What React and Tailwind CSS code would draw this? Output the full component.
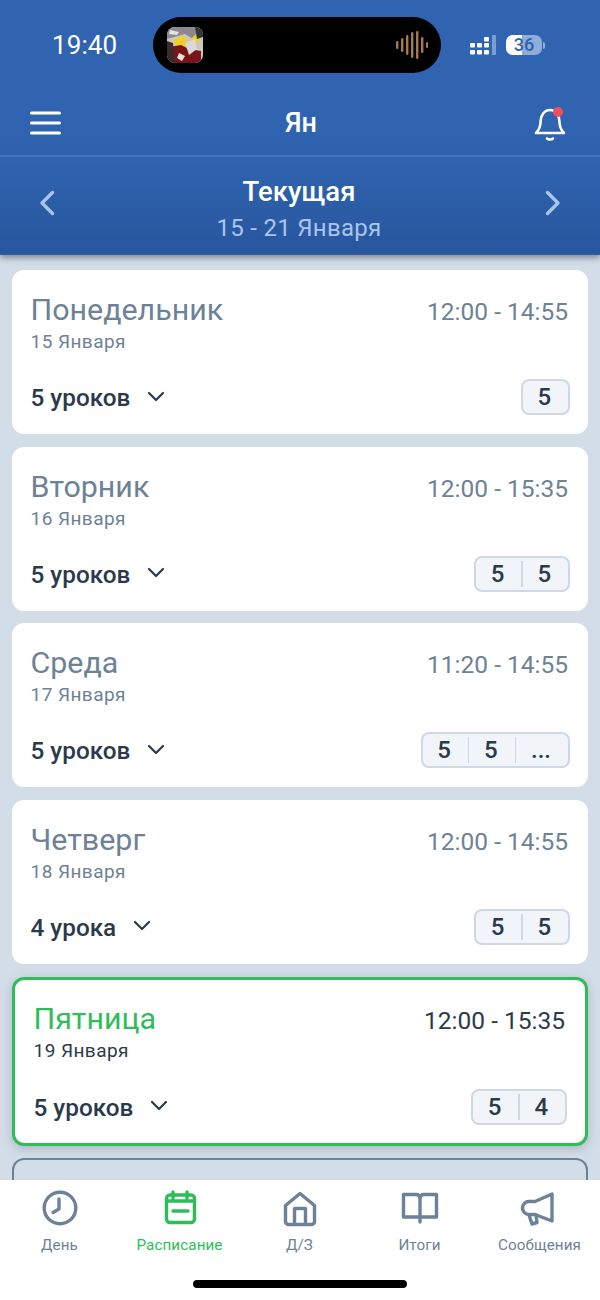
import React from 'react';

const DAYS = [
  { name: 'Понедельник', date: '15 Января', time: '12:00 - 14:55', lessons: '5 уроков', marks: ['5'] },
  { name: 'Вторник', date: '16 Января', time: '12:00 - 15:35', lessons: '5 уроков', marks: ['5', '5'] },
  { name: 'Среда', date: '17 Января', time: '11:20 - 14:55', lessons: '5 уроков', marks: ['5', '5', '...'] },
  { name: 'Четверг', date: '18 Января', time: '12:00 - 14:55', lessons: '4 урока', marks: ['5', '5'] },
  { name: 'Пятница', date: '19 Января', time: '12:00 - 15:35', lessons: '5 уроков', marks: ['5', '4'], active: true },
];

const Chevron = () => (
  <svg width="18" height="12" viewBox="0 0 18 12" fill="none" stroke="#2b3a4b" strokeWidth="2.2" strokeLinecap="round" strokeLinejoin="round">
    <path d="M2 2l7 7 7-7" />
  </svg>
);

const Marks = ({ marks }) => (
  <div className="-mr-[2px] flex h-[36px] -translate-y-[1px] items-center rounded-lg border-2 border-[#cfd8e3] bg-[#f1f4f8]">
    {marks.map((m, i) => (
      <React.Fragment key={i}>
        {i > 0 && <div className="h-[26px] w-[1.5px] bg-[#cfd8e3]" />}
        <div className={`pr-[2px] text-center text-[24px] leading-none font-medium text-[#2b3a4b] ${m === '...' ? 'w-[52px]' : 'w-[45.250px]'}`}>{m}</div>
      </React.Fragment>
    ))}
  </div>
);

const DayCard = ({ day }) => (
  <div className={`shrink-0 rounded-xl bg-white pr-[20px] pl-[18.500px] ${day.active ? 'h-[169px] border-[3px] border-[#2fbd59] pt-[20px] shadow-[0_3px_10px_rgba(100,116,139,0.35)]' : 'h-[164px] pt-[21px]'}`}>
    <div className="flex items-start justify-between">
      <div className={`text-[30.400px] leading-[38px] ${day.active ? 'text-[#2fbd59]' : 'text-[#6d8296]'}`}>{day.name}</div>
      <div className={`pt-[6px] text-[24.500px] leading-[30px] ${day.active ? 'text-[#2b3a4b]' : 'text-[#6d8296]'}`}>{day.time}</div>
    </div>
    <div className={`mt-[1px] text-[19px] leading-[24px] tracking-[0.45px] ${day.active ? 'text-[#2b3a4b]' : 'text-[#6d8296]'}`}>{day.date}</div>
    <div className={`flex items-center justify-between ${day.active ? 'mt-[27px]' : 'mt-[26px]'}`}>
      <div className="flex items-center gap-[17px]">
        <span className="text-[24.300px] leading-[36px] font-medium text-[#2b3a4b]">{day.lessons}</span>
        <span className="-mt-[3px]"><Chevron /></span>
      </div>
      <Marks marks={day.marks} />
    </div>
  </div>
);

const AlbumArt = () => (
  <svg width="36" height="36" viewBox="0 0 36 36" className="rounded-[8px]">
    <rect width="36" height="36" fill="#cfc7b8" />
    <path d="M0 0h36v8l-10 4-8-5L0 12z" fill="#8d8794" />
    <path d="M6 14l10-6 4 8 10-10 2 8-12 10-8-2z" fill="#ecd21f" />
    <path d="M2 20l12-2 8 4 12 2v12H6z" fill="#7a1418" />
    <path d="M18 16l10-4 2 10-8 6z" fill="#d9d9dc" />
    <path d="M0 14l6 2 2 20H0z" fill="#3a2a2c" />
    <path d="M28 0h8v10l-6 2z" fill="#2c3a2f" />
    <path d="M3 3l9 2-2 3-8-1zM12 26l6 3-3 5-5-3z" fill="#e8e4da" />
  </svg>
);

const Wave = () => (
  <svg width="32" height="28" viewBox="0 0 32 28" fill="#a57a4e">
    {[[0, 8], [5, 14], [10, 20], [15, 26], [20, 28], [25, 16], [30, 6]].map(([x, h]) => (
      <rect key={x} x={x} y={14 - h / 2} width="2.4" height={h} rx="1.2" />
    ))}
  </svg>
);

const Signal = () => (
  <svg width="27" height="20" viewBox="0 0 27 20" fill="#fff">
    {[[0, 8], [0, 15], [7, 8], [7, 15], [14, 2], [14, 8], [14, 15]].map(([x, y]) => (
      <rect key={`${x}-${y}`} x={x} y={y} width="5" height="4.6" rx="1" />
    ))}
    <rect x="22" y="0" width="4" height="20" rx="1" fill="#7d9fd0" />
  </svg>
);

const StatusBar = () => (
  <div className="relative flex h-[100px] shrink-0 items-start">
    <div className="mt-[27px] ml-[52px] w-[66px] text-[26px] leading-[36px] tracking-[0.1px] text-white">19:40</div>
    <div className="mt-[17px] ml-[35px] flex h-[56px] w-[288px] items-center justify-between rounded-full bg-black pr-[13px] pl-[14px]">
      <AlbumArt />
      <Wave />
    </div>
    <div className="mt-[35px] ml-[29px] flex items-center gap-[9px]">
      <Signal />
      <div className="flex items-center gap-[1px]">
        <div className="relative flex h-[20px] w-[36px] items-center justify-center overflow-hidden rounded-[7px] bg-[#8fadd8] text-[18px] leading-none font-medium text-[#2f62ad]">
          <div className="absolute inset-y-0 left-0 w-[16px] bg-white" />
          <span className="relative">36</span>
        </div>
        <div className="h-[7px] w-[2px] rounded-r bg-[#8fadd8]" />
      </div>
    </div>
  </div>
);

const Header = () => (
  <div className="relative z-10 h-[255px] shrink-0 bg-gradient-to-b from-[#3064b0] via-[#3064b0] to-[#2a5ba4] shadow-[0_3px_6px_rgba(30,41,59,0.45)]">
    <StatusBar />
    <div className="flex h-[57px] items-center justify-between border-b-2 border-[#4474bb] pr-[34px] pb-[9px] pl-[30px]">
      <svg width="31" height="24" viewBox="0 0 31 24" stroke="#fff" strokeWidth="3" strokeLinecap="round">
        <path d="M1.5 2h28M1.5 12h28M1.5 22h28" />
      </svg>
      <div className="pl-[7px] text-[27px] font-medium text-white">Ян</div>
      <div className="relative">
        <svg width="32" height="36" viewBox="0 0 32 36" fill="none" stroke="#fff" strokeWidth="2.6" strokeLinecap="round" strokeLinejoin="round">
          <path d="M2 28h28c-3-3-4.5-6-4.5-11 0-6-3.5-12-9.5-12S6.500 11 6.500 17c0 5-1.500 8-4.500 11z" />
          <path d="M13 33.500c1.500 1.300 4.500 1.300 6 0" />
        </svg>
        <div className="absolute top-[2px] right-[3px] size-[10px] rounded-full bg-[#f0505a]" />
      </div>
    </div>
    <div className="flex h-[96px] items-center justify-between bg-gradient-to-b from-[#3064b0] to-[#27569d] px-[39px]">
      <svg width="16" height="26" viewBox="0 0 16 26" fill="none" stroke="#a9c5ee" strokeWidth="3.4" strokeLinecap="round" strokeLinejoin="round" className="-mt-[4px]">
        <path d="M13.500 2.500L3 13l10.500 10.500" />
      </svg>
      <div className="pt-[8px] pr-[2px] text-center">
        <div className="text-[27.500px] leading-[37px] font-medium text-white">Текущая</div>
        <div className="text-[24px] leading-[36px] tracking-[0.3px] text-[#a9c5ee]">15 - 21 Января</div>
      </div>
      <svg width="16" height="26" viewBox="0 0 16 26" fill="none" stroke="#a9c5ee" strokeWidth="3.4" strokeLinecap="round" strokeLinejoin="round" className="-mt-[4px]">
        <path d="M2.500 2.500L13 13 2.500 23.500" />
      </svg>
    </div>
  </div>
);

const TabIcon = ({ children, color }) => (
  <svg width="40" height="40" viewBox="0 0 40 40" fill="none" stroke={color} strokeWidth="3.400" strokeLinecap="round" strokeLinejoin="round">
    {children}
  </svg>
);

const GRAY = '#6d8296';
const GREEN = '#2fbd59';

const TABS = [
  { label: 'День', icon: <><circle cx="20" cy="19" r="15.800" /><path d="M19 10v10l-6 3.500" /></> },
  { label: 'Расписание', active: true, icon: <><rect x="6.500" y="6" width="28" height="27.500" rx="3.500" /><path d="M13 3v6M27 3v6M6.500 12h28M13 22h15" /></> },
  { label: 'Д/З', icon: <><path d="M5.500 16.500L20 4.500l14.500 12V32a3 3 0 0 1-3 3.500h-23a3 3 0 0 1-3-3.500z" /><path d="M14.500 35V19.500h11V35" /></> },
  { label: 'Итоги', icon: <path d="M3.500 5.500H16c2.500 0 4 1.500 4 4V28H3.500zM36.500 5.500H24c-2.500 0-4 1.500-4 4V28h16.500zM20 28v5" /> },
  { label: 'Сообщения', icon: <><path d="M32 5v27l-17-6.500H9a6.500 6.500 0 0 1 0-13h6z" /><path d="M9 26l3 9 5-1.500-1-7.500" /></> },
];

const TabBar = () => (
  <div className="relative z-10 flex h-[120px] shrink-0 flex-col bg-white">
    <div className="grid grid-cols-5 pt-[9px]">
      {TABS.map((t) => (
        <div key={t.label} className="flex flex-col items-center">
          <TabIcon color={t.active ? GREEN : GRAY}>{t.icon}</TabIcon>
          <div className={`mt-[5px] pr-[1px] text-[15.200px] leading-[22px] tracking-[0.1px] ${t.active ? 'text-[#2fbd59]' : 'text-[#6d8296]'}`}>{t.label}</div>
        </div>
      ))}
    </div>
    <div className="mx-auto mt-[24px] h-[8px] w-[214px] rounded-full bg-black" />
  </div>
);

export default function App() {
  return (
    <div className="flex h-[1300px] w-[600px] flex-col overflow-hidden bg-[#d3dde7] font-['Roboto',sans-serif]">
      <Header />
      <div className="flex min-h-0 flex-1 flex-col gap-[12.670px] overflow-hidden px-[12px] pt-[15px]">
        {DAYS.map((d) => <DayCard key={d.name} day={d} />)}
        <div className="h-[60px] shrink-0 rounded-xl border-2 border-[#6d8296]" />
      </div>
      <TabBar />
    </div>
  );
}
